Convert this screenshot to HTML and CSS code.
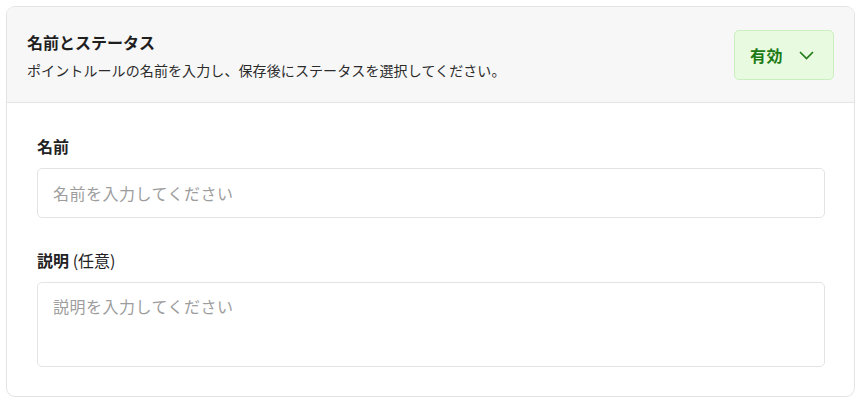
FILE: index.html
```html
<!DOCTYPE html>
<html lang="ja">
<head>
<meta charset="utf-8">
<link rel="stylesheet" href="styles.css">
</head>
<body>
<section class="card">
  <header class="card-head">
    <div class="head-text">
      <h2 class="title">名前とステータス</h2>
      <p class="subtitle">ポイントルールの名前を入力し、保存後にステータスを選択してください。</p>
    </div>
    <button class="status" type="button">
      <span>有効</span>
      <svg class="chev" width="15" height="9" viewBox="0 0 15 9"><path d="M1 1 L7.5 7.5 L14 1" fill="none" stroke="currentColor" stroke-width="1.6"/></svg>
    </button>
  </header>
  <div class="card-body">
    <div class="field">
      <label class="label">名前</label>
      <input class="input" type="text" placeholder="名前を入力してください">
    </div>
    <div class="field">
      <label class="label">説明 <span class="opt">(任意)</span></label>
      <textarea class="textarea" placeholder="説明を入力してください"></textarea>
    </div>
  </div>
</section>
</body>
</html>
```
FILE: styles.css
```css
* { box-sizing: border-box; }
body {
  margin: 0;
  background: #ffffff;
  font-family: "Noto Sans CJK JP", "Noto Sans", sans-serif;
  color: #222;
}
.card {
  margin: 6px 7px 0 6px;
  border: 1px solid #e3e3e3;
  border-radius: 9px;
  overflow: hidden;
  background: #fff;
}
.card-head {
  background: #f7f7f7;
  border-bottom: 1px solid #e5e5e5;
  padding: 21px 20px 20px 20px;
  display: flex;
  align-items: center;
  justify-content: space-between;
}
.title {
  margin: 0;
  font-size: 16px;
  font-weight: 700;
  line-height: 28px;
  color: #1f1f1f;
}
.subtitle {
  margin: 2px 0 0;
  font-size: 14px;
  line-height: 24px;
  letter-spacing: 0.1px;
  color: #2b2b2b;
}
.status {
  height: 50px;
  width: 100px;
  display: flex;
  align-items: center;
  gap: 16px;
  padding: 0 0 0 15px;
  background: #e8fbe0;
  border: 1px solid #c8efbd;
  border-radius: 5px;
  color: #1d7a14;
  font-family: inherit;
  font-size: 16px;
  font-weight: 700;
  letter-spacing: 0.5px;
}
.chev { display: block; color: #1d7a14; }
.card-body {
  padding: 33px 29px 29px 30px;
}
.field { display: flex; flex-direction: column; }
.field + .field { margin-top: 32px; }
.label {
  font-size: 16px;
  font-weight: 700;
  line-height: 20px;
  color: #222;
  margin-bottom: 12px;
}
.opt { font-weight: 400; }
.input, .textarea {
  width: 100%;
  border: 1px solid #e3e3e3;
  border-radius: 5px;
  font-family: inherit;
  font-size: 16px;
  letter-spacing: 0.5px;
  color: #222;
  padding: 0 15px;
  outline: none;
  background: #fff;
}
.input { height: 50px; }
.textarea {
  height: 85px;
  padding-top: 11px;
  line-height: 24px;
  resize: none;
  display: block;
}
.input::placeholder, .textarea::placeholder { color: #9d9d9d; }
```
